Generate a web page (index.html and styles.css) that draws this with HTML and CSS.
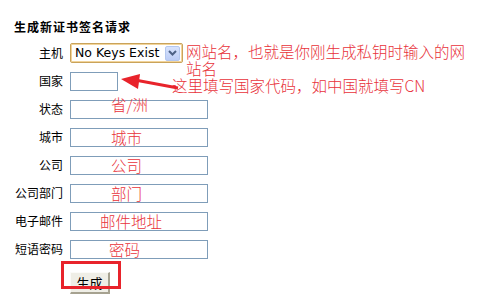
FILE: index.html
```html
<!DOCTYPE html>
<html>
<head>
<meta charset="utf-8">
<link rel="stylesheet" href="styles.css">
</head>
<body>
<div class="page">
  <div class="title">生成新证书签名请求</div>
  <div class="form">
    <div class="label">主机</div>
    <div class="field">
      <div class="select"><span class="select-text">No Keys Exist</span><span class="select-btn"><svg width="9" height="6" viewBox="0 0 9 6"><path d="M1 1 L4.5 4.5 L8 1" fill="none" stroke="#4d6185" stroke-width="2"/></svg></span></div>
    </div>
    <div class="label">国家</div>
    <div class="field"><div class="input short"></div></div>
    <div class="label">状态</div>
    <div class="field"><div class="input"></div></div>
    <div class="label">城市</div>
    <div class="field"><div class="input"></div></div>
    <div class="label">公司</div>
    <div class="field"><div class="input"></div></div>
    <div class="label">公司部门</div>
    <div class="field"><div class="input"></div></div>
    <div class="label">电子邮件</div>
    <div class="field"><div class="input"></div></div>
    <div class="label">短语密码</div>
    <div class="field"><div class="input"></div></div>
    <div class="label"></div>
    <div class="field"><div class="button">生成</div></div>
  </div>

  <div class="note note-host">网站名，也就是你刚生成私钥时输入的网<br>站名</div>
  <div class="note note-country">这里填写国家代码，如中国就填写CN</div>
  <div class="note n-state">省/洲</div>
  <div class="note n-city">城市</div>
  <div class="note n-company">公司</div>
  <div class="note n-dept">部门</div>
  <div class="note n-email">邮件地址</div>
  <div class="note n-pwd">密码</div>
  <svg class="arrow" width="60" height="20" viewBox="0 0 60 20">
    <path d="M14 6 L57 14" stroke="#e8232b" stroke-width="3" fill="none"/>
    <path d="M0 5 L19 0 L17 15 Z" fill="#e8232b"/>
  </svg>
  <div class="redbox"></div>
</div>
</body>
</html>
```

FILE: styles.css
```css
html, body {
  margin: 0;
  padding: 0;
  background: #ffffff;
}
.page {
  position: relative;
  width: 504px;
  height: 306px;
  padding: 19px 0 0 14px;
  box-sizing: border-box;
  font-family: "Noto Sans CJK SC", "DejaVu Sans", sans-serif;
  color: #000;
}
.title {
  font-size: 12px;
  font-weight: bold;
  line-height: 16px;
  height: 16px;
  letter-spacing: 1px;
}
.form {
  margin-top: 8px;
  display: grid;
  grid-template-columns: 49px auto;
  column-gap: 7px;
  row-gap: 8px;
  grid-auto-rows: 20px;
}
.label {
  font-size: 12px;
  line-height: 20px;
  text-align: right;
  white-space: nowrap;
}
.field {
  display: flex;
  align-items: center;
}
.input {
  width: 138px;
  height: 19px;
  box-sizing: border-box;
  border: 1px solid #7f9db9;
  background: #fff;
}
.input.short {
  width: 48px;
}
.select {
  width: 113px;
  height: 20px;
  box-sizing: border-box;
  border: 1px solid #c9a35b;
  border-radius: 2px;
  box-shadow: inset 0 0 0 1px #f2d49a;
  display: flex;
  align-items: center;
  justify-content: space-between;
  padding: 0 2px 0 4px;
  background: #fff;
}
.select-text {
  font-family: "DejaVu Sans", sans-serif;
  font-size: 12.5px;
  line-height: 16px;
  white-space: nowrap;
}
.select-btn {
  width: 15px;
  height: 15px;
  box-sizing: border-box;
  border: 1px solid #b4c7ee;
  border-radius: 2px;
  background: linear-gradient(#d8e3fc, #bccdf6);
  display: flex;
  align-items: center;
  justify-content: center;
}
.button {
  margin-top: 12px;
  width: 40px;
  height: 22px;
  box-sizing: border-box;
  background: #efeee6;
  border-top: 1px solid #fbfbf8;
  border-left: 1px solid #fbfbf8;
  border-right: 2px solid #a6a290;
  border-bottom: 2px solid #a6a290;
  font-size: 13px;
  line-height: 19px;
  text-align: center;
}
.note {
  position: absolute;
  color: #e8323a;
  font-size: 15.5px;
  font-weight: 300;
  line-height: 16px;
  white-space: nowrap;
}
.note-host { left: 186px; top: 43px; line-height: 17px; }
.note-country { left: 172px; top: 77px; }
.n-state { left: 111px; top: 96px; }
.n-city { left: 111px; top: 129px; }
.n-company { left: 111px; top: 157px; }
.n-dept { left: 111px; top: 185px; }
.n-email { left: 100px; top: 213px; }
.n-pwd { left: 109px; top: 241px; }
.arrow {
  position: absolute;
  left: 121px;
  top: 74px;
}
.redbox {
  position: absolute;
  left: 61px;
  top: 261px;
  width: 60px;
  height: 28px;
  box-sizing: border-box;
  border: 3px solid #e8232b;
}
```
